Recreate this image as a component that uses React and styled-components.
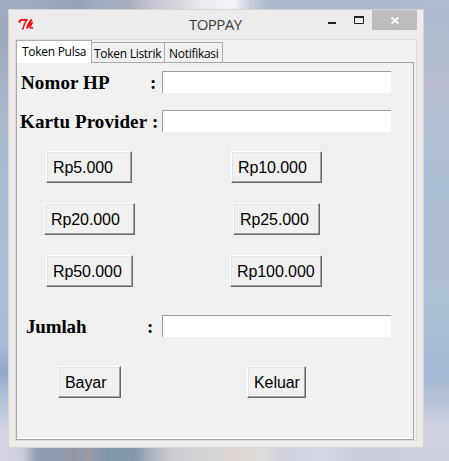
import React from 'react';
import styled, { createGlobalStyle } from 'styled-components';

const GlobalStyle = createGlobalStyle`
  * { box-sizing: border-box; }
  html, body { margin: 0; padding: 0; overflow: hidden; }
`;

const Desktop = styled.main`
  width: 449px;
  height: 461px;
  padding: 9px 25px 13px 8px;
  background:
    linear-gradient(90deg, #a0acc2 0%, #9caabf 10%, #94a5b9 17%, #a3adc0 23%, #a9aec0 29%, #c9c7d2 34%, #d9d5dd 40%, #eceaf1 45%, #f3f2f8 52%, #c5cdda 56%, #acb9cc 60%, #a9b7cb 80%, #b0bdd0 100%) 0 0 / 449px 9px no-repeat,
    linear-gradient(90deg, #d6d6e2 0%, #cccedb 5%, #929fb5 8%, #9097a8 16%, #9d9ba8 20%, #7e94ac 24%, #8598ae 30%, #aeb4bf 34%, #cbccd2 38%, #d5d3d5 46%, #ddd5d1 51%, #dedbda 59%, #d0d1df 63%, #d4d7e4 72%, #cbcddd 80%, #cecfdf 100%) 0 448px / 449px 13px no-repeat,
    linear-gradient(180deg, #aebbce 0%, #b0bccb 12%, #b9bccd 18%, #b2bfd0 26%, #abbdd6 40%, #adbcd2 52%, #adbfd6 65%, #a5b8d5 82%, #b8c2d7 87%, #d2d4e2 93%, #cccddd 100%) 424px 0 / 25px 461px no-repeat,
    linear-gradient(180deg, #a0acc2 0%, #9ca9bc 7%, #a9b6c8 22%, #abbad1 38%, #acbcd8 60%, #aabbd6 74%, #93a8c8 81%, #b0c0d7 86%, #d0d3e0 93%, #d6d8e4 100%) 0 0 / 8px 461px no-repeat;
`;

const Window = styled.section`
  width: 416px;
  height: 439px;
  padding: 0 6px 6px;
  border: 1px solid #d3d3d3;
  background: #ebebeb;
`;

const TitleBar = styled.header`
  display: grid;
  grid-template-columns: 16px 1fr 29px 19px 45px;
  align-items: start;
  height: 29px;
  padding-left: 2px;
  font: 15px/20px "Open Sans", "Noto Sans", sans-serif;
  color: #3c3c3c;
`;

const TkIcon = styled.svg`
  display: block;
  width: 16px;
  height: 16px;
  margin-top: 7px;
`;

const Title = styled.h1`
  margin: 4px 0 0 156px;
  font: inherit;
  letter-spacing: -0.55px;
`;

const WindowControl = styled.button`
  height: 20px;
  padding: 0;
  border: 0;
  background: ${({ $close }) => ($close ? '#bcbcbc' : 'transparent')};

  svg { display: block; }
`;

const Client = styled.div`
  height: 402px;
  width: 402px;
  border: 1px solid #dbdbdb;
  background: #f0f0f0;
`;

const Tabs = styled.nav`
  display: flex;
  align-items: flex-end;
  height: 22px;
`;

const Tab = styled.button`
  flex: none;
  width: ${({ $width }) => $width}px;
  height: ${({ $active }) => ($active ? 23 : 20)}px;
  margin-bottom: ${({ $active }) => ($active ? -1 : 0)}px;
  padding: ${({ $active }) => ($active ? 0 : 2)}px 0 0 ${({ $inset }) => $inset}px;
  border: solid #acacac;
  border-width: ${({ $active }) => ($active ? '1px 1px 0 1px' : '1px 1px 0 0')};
  background: ${({ $active }) => ($active ? '#fff' : '#f0f0f0')};
  color: #000;
  font: 12px/18px "Open Sans", "Noto Sans", sans-serif;
  letter-spacing: -0.28px;
  text-align: left;
  white-space: nowrap;
`;

const Panel = styled.form`
  width: 398px;
  height: 378px;
  padding-top: 8px;
  border: 1px solid #a8a8a8;
  box-shadow: inset 0 -1px #fff;
`;

const Field = styled.label`
  display: grid;
  grid-template-columns: ${({ $colon }) => $colon}px 1fr 229px;
  width: 374px;
  height: 22px;
  margin-bottom: ${({ $gap }) => $gap}px;
  padding-left: ${({ $inset }) => $inset}px;
  color: #000;
  font: bold 19px/23px "Liberation Serif", serif;
  letter-spacing: ${({ $spacing }) => $spacing}px;
  white-space: nowrap;
`;

const Entry = styled.input`
  width: 229px;
  height: 22px;
  border: solid #a0a0a0;
  border-width: 1px 0 0 1px;
  border-radius: 0;
  background: #fff;
  outline: none;
`;

const ButtonRow = styled.div`
  display: flex;
  gap: ${({ $gap }) => $gap}px;
  margin-bottom: ${({ $after }) => $after}px;
  padding-left: ${({ $inset }) => $inset}px;
`;

const TkButton = styled.button`
  width: ${({ $width }) => $width}px;
  height: 32px;
  padding: 1px 0 0 6px;
  border: 1px solid;
  border-color: #fff #696969 #696969 #fff;
  border-radius: 0;
  box-shadow: inset -1px -1px #a0a0a0, inset 1px 1px #e3e3e3;
  background: #f0f0f0;
  color: #000;
  font: 16px/28px "Liberation Sans", Arial, sans-serif;
  letter-spacing: -0.08px;
  text-align: left;
  white-space: nowrap;
`;

const tabs = [
  { text: 'Token Pulsa', width: 76, inset: 5, active: true },
  { text: 'Token Listrik', width: 73, inset: 2 },
  { text: 'Notifikasi', width: 58, inset: 4 },
];

const amounts = [
  { inset: 29, gap: 99, after: 20, items: [['Rp5.000', 86], ['Rp10.000', 91]] },
  { inset: 27, gap: 98, after: 20, items: [['Rp20.000', 91], ['Rp25.000', 87]] },
  { inset: 29, gap: 97, after: 28, items: [['Rp50.000', 87], ['Rp100.000', 92]] },
];

function LabeledEntry({ text, inset, colon, gap, spacing }) {
  return (
    <Field $inset={inset} $colon={colon} $gap={gap} $spacing={spacing}>
      <span>{text}</span>
      <span>:</span>
      <Entry aria-label={text} />
    </Field>
  );
}

function Buttons({ row }) {
  return (
    <ButtonRow $inset={row.inset} $gap={row.gap} $after={row.after}>
      {row.items.map(([text, width]) => (
        <TkButton key={text} type="button" $width={width}>{text}</TkButton>
      ))}
    </ButtonRow>
  );
}

export default function App() {
  return (
    <>
      <GlobalStyle />
      <Desktop>
        <Window>
          <TitleBar>
            <TkIcon viewBox="0 0 16 16" fill="none" stroke="#f00" aria-hidden="true">
              <path d="M2.5 5.8V4L4 2.9H10.5" strokeWidth="1.8" />
              <path d="M9.5 3Q7 7 6 11.8M5 11.8h1.7" strokeWidth="1.4" />
              <path d="M14.8 2.3Q11.5 6 10 11.6" strokeWidth="1.9" />
              <path d="M15.8 5.3L12 8H15M12 8.4L13.5 10.7H16" strokeWidth="1.6" />
            </TkIcon>
            <Title>TOPPAY</Title>
            <WindowControl type="button" aria-label="Minimize">
              <svg width="29" height="20"><path d="M4 13h8" stroke="#222" strokeWidth="2" /></svg>
            </WindowControl>
            <WindowControl type="button" aria-label="Maximize">
              <svg width="19" height="20"><path d="M1.5 6v7.5h9V6" fill="none" stroke="#222" /><path d="M1 7h10" stroke="#222" strokeWidth="2" /></svg>
            </WindowControl>
            <WindowControl type="button" aria-label="Close" $close>
              <svg width="45" height="20"><path d="M19.5 7.5l7 6m0-6l-7 6" stroke="#fff" strokeWidth="1.7" /></svg>
            </WindowControl>
          </TitleBar>
          <Client>
            <Tabs>
              {tabs.map((tab) => (
                <Tab key={tab.text} type="button" $width={tab.width} $inset={tab.inset} $active={tab.active}>
                  {tab.text}
                </Tab>
              ))}
            </Tabs>
            <Panel>
              <LabeledEntry text="Nomor HP" inset={4} colon={129} gap={17} spacing={0.12} />
              <LabeledEntry text="Kartu Provider" inset={3} colon={132} gap={19} spacing={0.1} />
              {amounts.map((row) => <Buttons key={row.items[0][0]} row={row} />)}
              <LabeledEntry text="Jumlah" inset={9} colon={121} gap={29} spacing={-0.15} />
              <Buttons row={{ inset: 41, gap: 126, after: 0, items: [['Bayar', 63], ['Keluar', 59]] }} />
            </Panel>
          </Client>
        </Window>
      </Desktop>
    </>
  );
}
